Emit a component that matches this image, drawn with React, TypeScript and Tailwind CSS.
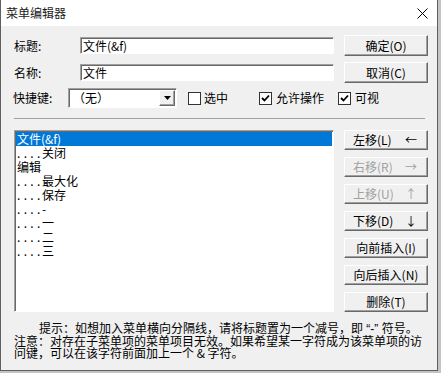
import React from "react";

const raised =
  "bg-[#f0f0f0] border-t border-l border-t-white border-l-white border-b border-r border-b-[#696969] border-r-[#696969] shadow-[inset_-1px_-1px_0_#a0a0a0]";
const sunken =
  "bg-white border-t border-l border-t-[#a0a0a0] border-l-[#a0a0a0] border-b border-r border-b-white border-r-white shadow-[inset_1px_1px_0_#696969]";

function Check({ checked }: { checked: boolean }) {
  return (
    <div className="w-[13px] h-[13px] border border-[#333333] bg-white flex items-center justify-center shrink-0">
      {checked && (
        <svg width="9" height="9" viewBox="0 0 9 9">
          <path d="M1 4 L3.5 6.5 L8 1.5" fill="none" stroke="#000" strokeWidth="1.8" />
        </svg>
      )}
    </div>
  );
}

function MoveBtn({ label, arrow, disabled }: { label: string; arrow: string; disabled?: boolean }) {
  return (
    <div
      className={
        raised +
        " h-[20px] w-[84px] flex items-center justify-between pl-[8px] pr-[10px] text-[12px] leading-[12px] " +
        (disabled ? "text-[#a0a0a0]" : "text-black")
      }
    >
      <span>{label}</span>
      <span>{arrow}</span>
    </div>
  );
}

function Btn({ label, h = "h-[20px]" }: { label: string; h?: string }) {
  return (
    <div className={raised + " " + h + " w-[84px] flex items-center justify-center text-[12px] leading-[12px] text-black"}>
      {label}
    </div>
  );
}

const items: { dots: boolean; text: string; sel?: boolean }[] = [
  { dots: false, text: "文件(&f)", sel: true },
  { dots: true, text: "关闭" },
  { dots: false, text: "编辑" },
  { dots: true, text: "最大化" },
  { dots: true, text: "保存" },
  { dots: true, text: "-" },
  { dots: true, text: "一" },
  { dots: true, text: "二" },
  { dots: true, text: "三" },
];

export default function App() {
  return (
    <div className="w-[441px] h-[373px] bg-[#c4c4c4] font-['Noto_Sans_CJK_SC',sans-serif] text-black">
      <div className="w-[438px] h-[371px] border-l border-r border-b border-[#5f5f5f] flex flex-col bg-[#f0f0f0]">
        {/* title bar */}
        <div className="h-[26px] bg-white flex items-center justify-between pl-[5px] pr-[9px] shrink-0">
          <span className="text-[12px] leading-[12px] text-[#1a1a1a]">菜单编辑器</span>
          <svg width="11" height="11" viewBox="0 0 11 11">
            <path d="M0.5 0.5 L10.5 10.5 M10.5 0.5 L0.5 10.5" stroke="#000" strokeWidth="1" />
          </svg>
        </div>

        {/* body */}
        <div className="flex flex-col pl-[13px] pt-[9px] text-[12px] leading-[12px]">
          {/* row 1 */}
          <div className="flex items-center h-[21px]">
            <span className="w-[66px]">标题:</span>
            <div className={sunken + " w-[254px] h-[17px] flex items-center pl-[2px]"}>文件(&f)</div>
            <div className="ml-[10px]">
              <Btn label="确定(O)" h="h-[21px]" />
            </div>
          </div>
          {/* row 2 */}
          <div className="flex items-center h-[21px] mt-[6px]">
            <span className="w-[66px]">名称:</span>
            <div className={sunken + " w-[254px] h-[17px] flex items-center pl-[2px]"}>文件</div>
            <div className="ml-[10px]">
              <Btn label="取消(C)" h="h-[21px]" />
            </div>
          </div>
          {/* row 3 */}
          <div className="flex items-center h-[20px] mt-[5px]">
            <span className="w-[55px] -ml-px">快捷键:</span>
            <div className={sunken + " w-[109px] h-[20px] flex items-center justify-between pl-[4px] pr-[1px]"}>
              <span>（无）</span>
              <div className={raised + " w-[16px] h-[16px] flex items-center justify-center"}>
                <svg width="7" height="4" viewBox="0 0 7 4">
                  <path d="M0 0 H7 L3.5 4 Z" fill="#000" />
                </svg>
              </div>
            </div>
            <div className="ml-[11px] flex items-center">
              <Check checked={false} />
              <span className="ml-[3px]">选中</span>
            </div>
            <div className="ml-[31px] flex items-center">
              <Check checked={true} />
              <span className="ml-[4px]">允许操作</span>
            </div>
            <div className="ml-[14px] flex items-center">
              <Check checked={true} />
              <span className="ml-[4px]">可视</span>
            </div>
          </div>

          {/* separator */}
          <div className="mt-[10px] h-px w-[411px] bg-[#a0a0a0]" />

          {/* list + buttons */}
          <div className="flex mt-[11px]">
            <div className={sunken + " w-[320px] h-[182px] p-px"}>
              {items.map((it, i) => (
                <div
                  key={i}
                  className={
                    "h-[14px] flex items-center pl-px text-[12px] leading-[12px] " +
                    (it.sel ? "bg-[#0078d7] text-white" : "text-black")
                  }
                >
                  {it.dots && <span className="inline-block w-[25px] tracking-[3.3px]">....</span>}
                  <span>{it.text}</span>
                </div>
              ))}
            </div>
            <div className="ml-[10px] flex flex-col gap-[7px]">
              <MoveBtn label="左移(L)" arrow="←" />
              <MoveBtn label="右移(R)" arrow="→" disabled />
              <MoveBtn label="上移(U)" arrow="↑" disabled />
              <MoveBtn label="下移(D)" arrow="↓" />
              <Btn label="向前插入(I)" />
              <Btn label="向后插入(N)" />
              <Btn label="删除(T)" />
            </div>
          </div>

          {/* hint */}
          <div className="mt-[10px] text-[12px] leading-[12px] whitespace-nowrap">
            <div className="pl-[25px]">
              提示：如想加入菜单横向分隔线，请将标题置为一个减号，即
              <span className="font-['Liberation_Sans',sans-serif]"> “-” </span>
              符号。
            </div>
            <div>注意：对存在子菜单项的菜单项目无效。如果希望某一字符成为该菜单项的访</div>
            <div>问键，可以在该字符前面加上一个 &amp; 字符。</div>
          </div>
        </div>
      </div>
    </div>
  );
}
